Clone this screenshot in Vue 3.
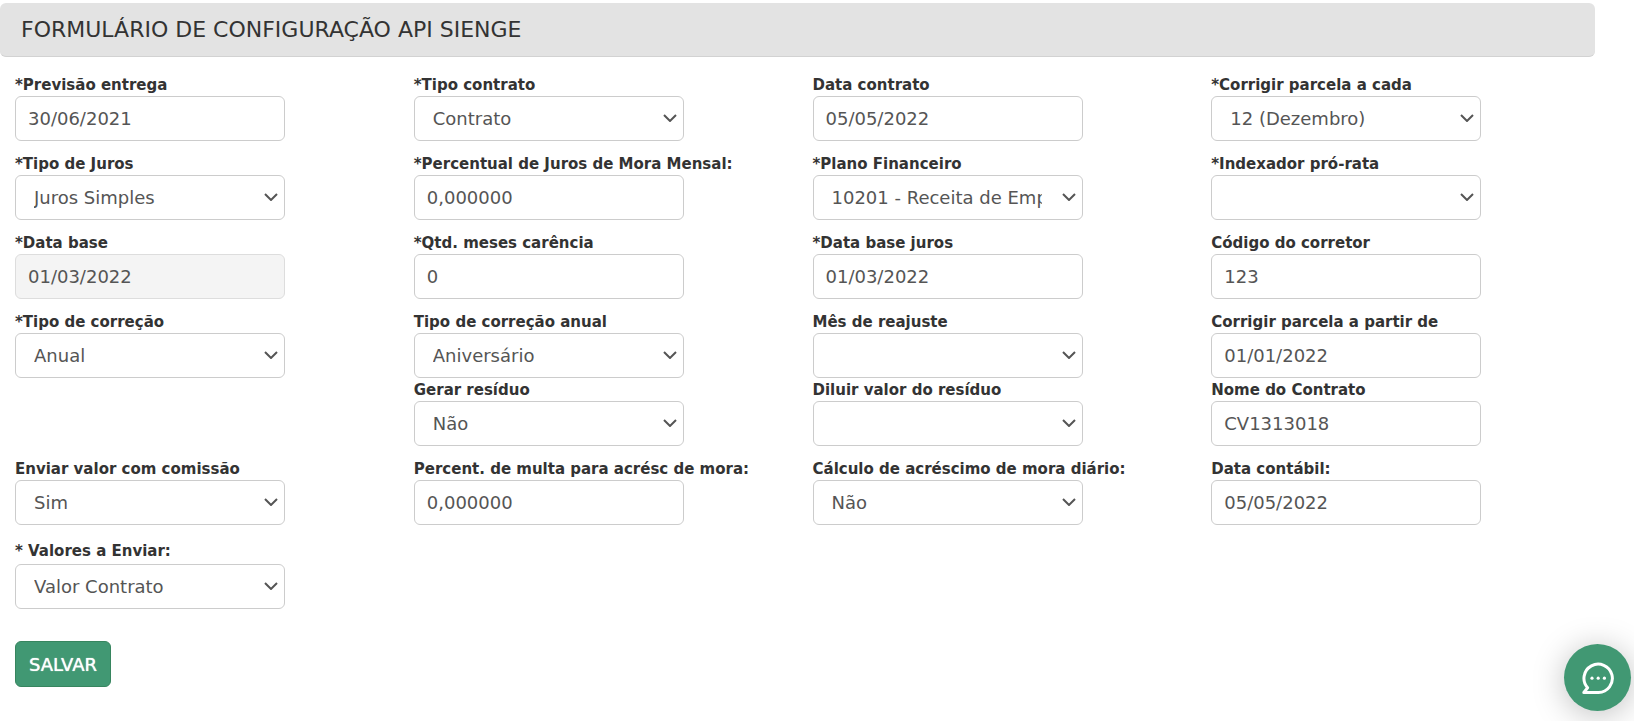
<script setup>
import { reactive } from 'vue'

const text = (id, label, value, extra = {}) => ({ id, label, value, kind: 'text', ...extra })
const select = (id, label, value, extra = {}) => ({ id, label, value, kind: 'select', ...extra })

const rows = reactive([
  {
    id: 'entrega',
    fields: [
      text('previsao-entrega', '*Previsão entrega', '30/06/2021'),
      select('tipo-contrato', '*Tipo contrato', 'Contrato'),
      text('data-contrato', 'Data contrato', '05/05/2022'),
      select('corrigir-cada', '*Corrigir parcela a cada', '12 (Dezembro)'),
    ],
  },
  {
    id: 'juros',
    fields: [
      select('tipo-juros', '*Tipo de Juros', 'Juros Simples'),
      text('juros-mora', '*Percentual de Juros de Mora Mensal:', '0,000000'),
      select('plano-financeiro', '*Plano Financeiro', '10201 - Receita de Empreendimentos'),
      select('indexador', '*Indexador pró-rata', ''),
    ],
  },
  {
    id: 'base',
    fields: [
      text('data-base', '*Data base', '01/03/2022', { disabled: true }),
      text('meses-carencia', '*Qtd. meses carência', '0'),
      text('data-base-juros', '*Data base juros', '01/03/2022'),
      text('codigo-corretor', 'Código do corretor', '123'),
    ],
  },
  {
    id: 'correcao',
    tight: true,
    fields: [
      select('tipo-correcao', '*Tipo de correção', 'Anual'),
      select('correcao-anual', 'Tipo de correção anual', 'Aniversário'),
      select('mes-reajuste', 'Mês de reajuste', ''),
      text('corrigir-partir', 'Corrigir parcela a partir de', '01/01/2022'),
    ],
  },
  {
    id: 'residuo',
    fields: [
      { id: 'vazio', kind: 'empty' },
      select('gerar-residuo', 'Gerar resíduo', 'Não'),
      select('diluir-residuo', 'Diluir valor do resíduo', ''),
      text('nome-contrato', 'Nome do Contrato', 'CV1313018'),
    ],
  },
  {
    id: 'comissao',
    fields: [
      select('valor-comissao', 'Enviar valor com comissão', 'Sim'),
      text('percent-multa', 'Percent. de multa para acrésc de mora:', '0,000000'),
      select('mora-diario', 'Cálculo de acréscimo de mora diário:', 'Não'),
      text('data-contabil', 'Data contábil:', '05/05/2022'),
    ],
  },
  {
    id: 'valores',
    spaced: true,
    fields: [select('valores-enviar', '* Valores a Enviar:', 'Valor Contrato')],
  },
])
</script>

<template>
  <main class="page">
    <header class="heading">
      <h1>FORMULÁRIO DE CONFIGURAÇÃO API SIENGE</h1>
    </header>

    <form class="form" @submit.prevent>
      <div
        v-for="row in rows"
        :key="row.id"
        class="row"
        :class="{ tight: row.tight, spaced: row.spaced }"
      >
        <div v-for="field in row.fields" :key="field.id" class="field">
          <template v-if="field.kind !== 'empty'">
            <label :for="field.id">{{ field.label }}</label>
            <input
              v-if="field.kind === 'text'"
              :id="field.id"
              v-model="field.value"
              class="control"
              type="text"
              :disabled="field.disabled"
            />
            <div v-else class="picker">
              <select :id="field.id" v-model="field.value" class="control">
                <option :value="field.value">{{ field.value }}</option>
              </select>
              <svg class="chevron" viewBox="0 0 14 8" aria-hidden="true">
                <path d="M1 1l6 6 6-6" />
              </svg>
            </div>
          </template>
        </div>
      </div>

      <button class="save" type="submit">SALVAR</button>
    </form>

    <button class="chat" type="button" aria-label="Chat">
      <svg viewBox="0 0 34 34" aria-hidden="true">
        <path d="M17.5 31.5H2.8l3.8-4.7A14.2 14.2 0 1 1 17.5 31.5z" />
        <circle cx="11" cy="17.2" r="1.6" />
        <circle cx="17.2" cy="17.2" r="1.6" />
        <circle cx="23.4" cy="17.2" r="1.6" />
      </svg>
    </button>
  </main>
</template>

<style>
body {
  margin: 0;
  background: #fff;
}
</style>

<style scoped>
.page {
  padding: 3px 39px 32px 0;
  font-family: Verdana, 'DejaVu Sans', sans-serif;
  color: #333;
}

.heading {
  box-sizing: border-box;
  padding: 12px 21px;
  border-bottom: 1px solid #d2d2d2;
  border-radius: 6px;
  background: #e3e3e3;
}

h1 {
  margin: 0;
  font-size: 22px;
  font-weight: 400;
  line-height: 29px;
}

.form {
  padding-top: 19px;
}

.row {
  display: grid;
  grid-template-columns: repeat(4, minmax(0, 1fr));
  margin-bottom: 14px;
}

.row.tight {
  margin-bottom: 3px;
}

.row.spaced {
  padding-top: 3px;
}

.field {
  padding: 0 15px;
}

label {
  display: block;
  margin-bottom: 2px;
  font-size: 15px;
  font-weight: 700;
  line-height: 18px;
  white-space: nowrap;
}

.spaced label {
  margin-bottom: 4px;
}

.control {
  display: block;
  box-sizing: border-box;
  width: 100%;
  height: 45px;
  margin: 0;
  padding: 0 12px;
  border: 1px solid #ccc;
  border-radius: 6px;
  background: #fff;
  color: #555;
  font: inherit;
  font-size: 18px;
  outline: none;
}

input.control,
.picker {
  max-width: 270px;
}

input.control:disabled {
  border-color: #ddd;
  background: #f4f4f4;
}

.picker {
  position: relative;
}

select.control {
  appearance: none;
  padding: 0 40px 0 18px;
}

.chevron {
  position: absolute;
  top: 18px;
  right: 7px;
  width: 14px;
  height: 8px;
  fill: none;
  stroke: #555;
  stroke-width: 2;
  pointer-events: none;
}

.save {
  display: block;
  height: 46px;
  margin: 32px 0 0 15px;
  padding: 0 13px;
  border: 1px solid #37855f;
  border-radius: 6px;
  background: #419873;
  color: #fff;
  font: inherit;
  font-size: 18px;
  text-shadow: 0 0 1px #fff;
}

.chat {
  position: fixed;
  right: 3px;
  bottom: 10px;
  display: grid;
  place-items: center;
  width: 67px;
  height: 67px;
  padding: 0;
  border: 0;
  border-radius: 50%;
  background: #419873;
  box-shadow: 0 4px 32px rgba(0, 0, 0, 0.25);
}

.chat svg {
  width: 34px;
  height: 34px;
  fill: #fff;
}

.chat path {
  fill: none;
  stroke: #fff;
  stroke-width: 3;
  stroke-linejoin: round;
}
</style>
